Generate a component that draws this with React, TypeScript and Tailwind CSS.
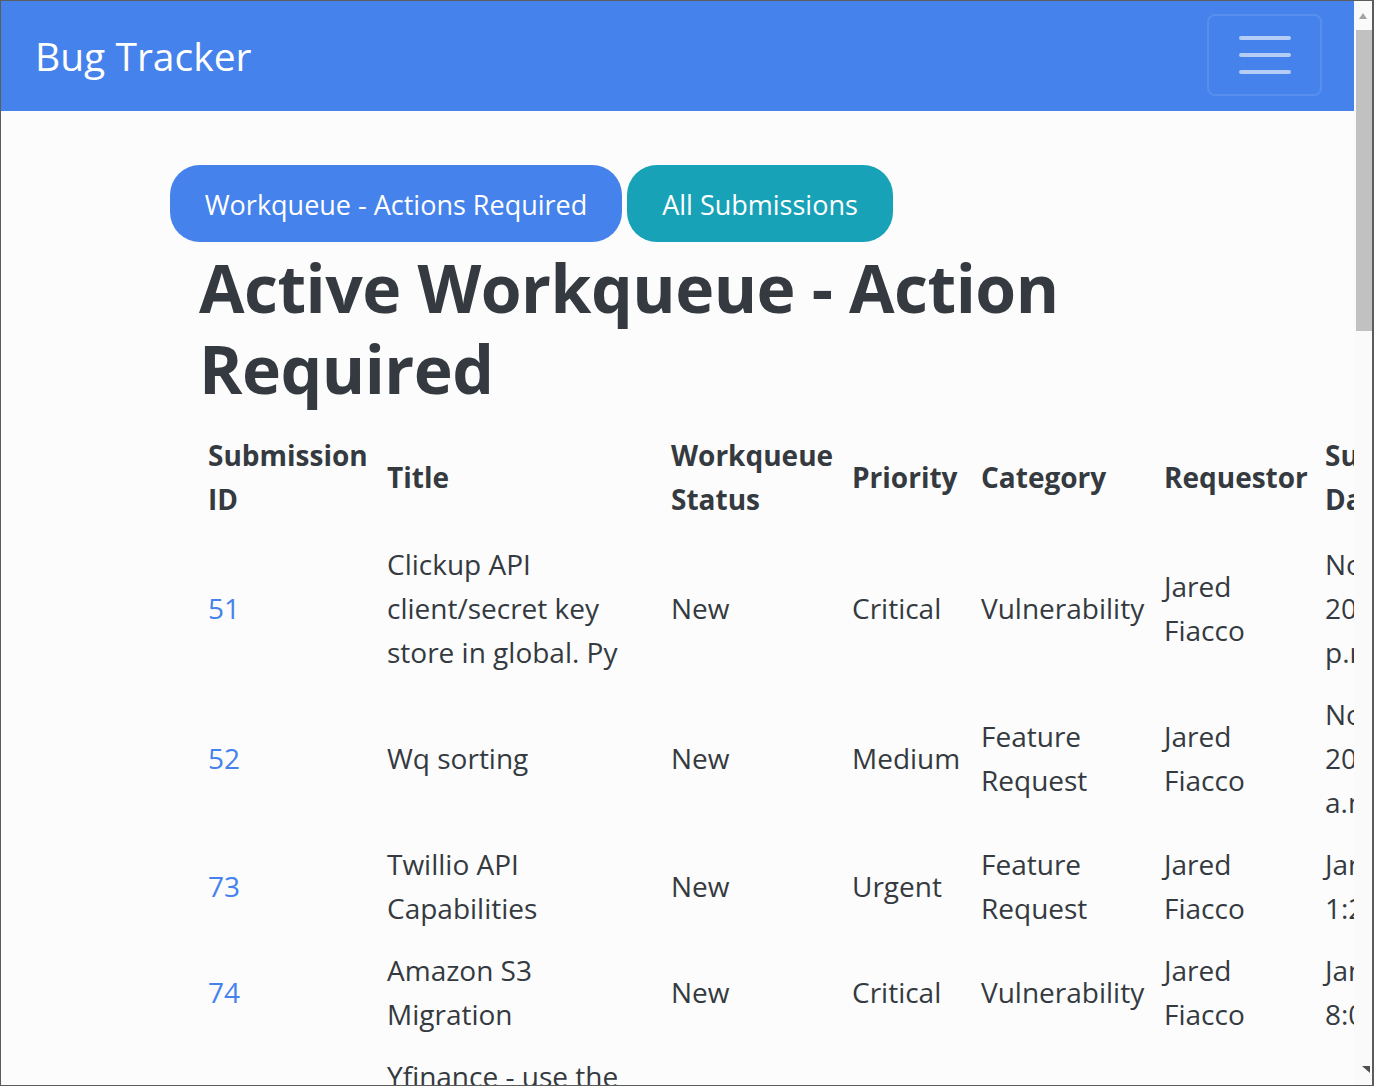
import React from 'react';

const font = { fontFamily: '"Open Sans", "Noto Sans", sans-serif' };

type Row = {
  id: number;
  title: string[];
  status: string;
  priority: string;
  category: string[];
  requestor: string[];
  date: string[];
};

const rows: Row[] = [
  {
    id: 51,
    title: ['Clickup API', 'client/secret key', 'store in global. Py'],
    status: 'New',
    priority: 'Critical',
    category: ['Vulnerability'],
    requestor: ['Jared', 'Fiacco'],
    date: ['Nov. 21,', '2023, 7:04', 'p.m.'],
  },
  {
    id: 52,
    title: ['Wq sorting'],
    status: 'New',
    priority: 'Medium',
    category: ['Feature', 'Request'],
    requestor: ['Jared', 'Fiacco'],
    date: ['Nov. 23,', '2023, 10:12', 'a.m.'],
  },
  {
    id: 73,
    title: ['Twillio API', 'Capabilities'],
    status: 'New',
    priority: 'Urgent',
    category: ['Feature', 'Request'],
    requestor: ['Jared', 'Fiacco'],
    date: ['Jan. 5, 2024,', '1:22 p.m.'],
  },
  {
    id: 74,
    title: ['Amazon S3', 'Migration'],
    status: 'New',
    priority: 'Critical',
    category: ['Vulnerability'],
    requestor: ['Jared', 'Fiacco'],
    date: ['Jan. 8, 2024,', '8:07 a.m.'],
  },
  {
    id: 75,
    title: ['Yfinance - use the', 'API to pull stock', 'data into the', 'dashboard'],
    status: 'New',
    priority: 'Medium',
    category: ['Feature', 'Request'],
    requestor: ['Jared', 'Fiacco'],
    date: ['Jan. 9, 2024,', '9:30 a.m.'],
  },
];

function Lines({ lines }: { lines: string[] }) {
  return (
    <>
      {lines.map((l, i) => (
        <React.Fragment key={i}>
          {i > 0 && <br />}
          {l}
        </React.Fragment>
      ))}
    </>
  );
}

const cell = 'px-[9px] py-[9px] align-middle whitespace-nowrap';
const head = 'px-[9px] pt-[6px] pb-[12px] align-middle whitespace-nowrap';

export default function App() {
  return (
    <div className="w-[1374px] h-[1086px] flex overflow-hidden border-l border-t border-b border-r-2 border-[#5c5c5c] bg-[#fcfcfc]" style={font}>
      {/* PAGE */}
      <div className="flex-1 overflow-hidden text-[#343a40]">
        <nav className="h-[110px] bg-[#4582ec] flex items-center justify-between pl-[34px] pr-[32px]">
          <a className="text-white text-[39px] leading-none pb-[2px]">Bug Tracker</a>
          <button className="w-[115px] h-[82px] mb-[3px] rounded-[8px] border-2 border-white/10 flex flex-col items-center justify-center gap-[13px]">
            <span className="block w-[52px] h-[4px] rounded-full bg-white/60" />
            <span className="block w-[52px] h-[4px] rounded-full bg-white/60" />
            <span className="block w-[52px] h-[4px] rounded-full bg-white/60" />
          </button>
        </nav>

        <div className="pl-[169px] pt-[54px]">
          <div className="flex gap-[5px]">
            <button className="h-[77px] w-[452px] pt-[3px] rounded-[30px] bg-[#4582ec] text-white text-[27px]">
              Workqueue - Actions Required
            </button>
            <button className="h-[77px] w-[266px] pt-[3px] rounded-[30px] bg-[#18a2b8] text-white text-[27px]">
              All Submissions
            </button>
          </div>

          <div className="pl-[29px]">
            <h1 className="text-[66px] font-bold leading-[81px] mt-[5px] tracking-[-0.5px]">
              Active Workqueue - Action
              <br />
              Required
            </h1>

            <table className="table-fixed border-collapse mt-[18px] text-[28px] leading-[44px]" style={{ width: 1400 }}>
              <colgroup>
                <col style={{ width: 179 }} />
                <col style={{ width: 284 }} />
                <col style={{ width: 181 }} />
                <col style={{ width: 129 }} />
                <col style={{ width: 183 }} />
                <col style={{ width: 161 }} />
                <col style={{ width: 283 }} />
              </colgroup>
              <thead>
                <tr className="font-bold text-left">
                  <th className={head}>Submission<br />ID</th>
                  <th className={head}>Title</th>
                  <th className={head}>Workqueue<br />Status</th>
                  <th className={head}>Priority</th>
                  <th className={head}>Category</th>
                  <th className={head}>Requestor</th>
                  <th className={head}>Submitted<br />Date</th>
                </tr>
              </thead>
              <tbody>
                {rows.map((r) => (
                  <tr key={r.id}>
                    <td className={cell}>
                      <a className="text-[#4582ec]">{r.id}</a>
                    </td>
                    <td className={cell}><Lines lines={r.title} /></td>
                    <td className={cell}>{r.status}</td>
                    <td className={cell}>{r.priority}</td>
                    <td className={cell}><Lines lines={r.category} /></td>
                    <td className={cell}><Lines lines={r.requestor} /></td>
                    <td className={cell}><Lines lines={r.date} /></td>
                  </tr>
                ))}
              </tbody>
            </table>
          </div>
        </div>
      </div>

      {/* SCROLLBAR */}
      <div className="w-[18px] shrink-0 bg-[#fafafa] flex flex-col items-end">
        <div className="h-[29px] w-full flex items-center justify-center">
          <svg width="10" height="8" viewBox="0 0 10 8">
            <polygon points="5,1 9,7 1,7" fill="#a3a3a3" />
          </svg>
        </div>
        <div className="w-[16px] h-[301px] bg-[#c1c1c1]" />
        <div className="flex-1" />
        <div className="h-[20px] w-full flex items-start justify-end pr-[1px]">
          <svg width="10" height="8" viewBox="0 0 10 8">
            <polygon points="1,1 9,1 9,8" fill="#505050" />
          </svg>
        </div>
      </div>
    </div>
  );
}
